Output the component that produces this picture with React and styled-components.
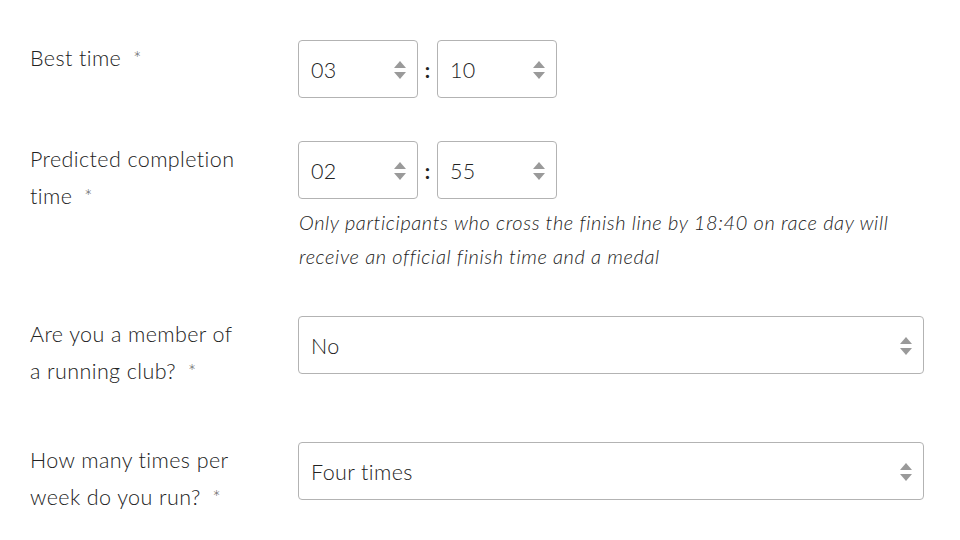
import React from 'react'
import styled, { createGlobalStyle } from 'styled-components'

const GlobalStyle = createGlobalStyle`
body {
  margin: 0;
  background: #ffffff;
  font-family: 'Lato', 'Open Sans', sans-serif;
  font-weight: 300;
  color: #222222;
}
`

const Form = styled.div`
padding: 40px 0 0 30px;
width: 960px;
box-sizing: border-box;
`

const Row = styled.div`
display: grid;
grid-template-columns: 268px 626px;
margin-bottom: ${p => p.spacing}px;
`

const Label = styled.div`
font-size: 21.5px;
letter-spacing: 0.4px;
line-height: 37px;
color: #222;
width: 212px;
`

const Star = styled.span`
color: #5a5a5a;
font-size: 19px;
margin-left: 12px;
`

const Field = styled.div`
display: flex;
flex-direction: column;
`

const TimeRow = styled.div`
display: flex;
align-items: center;
`

const Colon = styled.span`
font-size: 21px;
font-weight: 700;
width: 19px;
text-align: center;
color: #222;
`

const SelectBox = styled.div`
box-sizing: border-box;
width: ${p => p.width}px;
height: 58px;
border: 1px solid #b3b3b3;
border-radius: 4px;
display: flex;
align-items: center;
justify-content: space-between;
padding: 1px 10px 0 12px;
font-size: 21.5px;
letter-spacing: 0.4px;
color: #222;
background: #fff;
`

const Help = styled.p`
margin: 6px 0 0 1px;
max-width: 605px;
font-style: italic;
font-size: 20px;
letter-spacing: 0.6px;
line-height: 34px;
color: #222;
`

function Arrows() {
  return (
    <svg width="14" height="22" viewBox="0 0 14 22">
      <path d="M7 2 L13 9 L1 9 Z" fill="#9a9a9a" />
      <path d="M7 20 L13 13 L1 13 Z" fill="#9a9a9a" />
    </svg>
  )
}

function Select({ value, width }) {
  return (
    <SelectBox width={width}>
      <span>{value}</span>
      <Arrows />
    </SelectBox>
  )
}

export default function App() {
  return (
    <Form>
      <GlobalStyle />

      <Row spacing={43}>
        <Label>Best time<Star>*</Star></Label>
        <Field>
          <TimeRow>
            <Select value="03" width={120} />
            <Colon>:</Colon>
            <Select value="10" width={120} />
          </TimeRow>
        </Field>
      </Row>

      <Row spacing={43}>
        <Label>Predicted completion time<Star>*</Star></Label>
        <Field>
          <TimeRow>
            <Select value="02" width={120} />
            <Colon>:</Colon>
            <Select value="55" width={120} />
          </TimeRow>
          <Help>Only participants who cross the finish line by 18:40 on race day will receive an official finish time and a medal</Help>
        </Field>
      </Row>

      <Row spacing={52}>
        <Label>Are you a member of a running club?<Star>*</Star></Label>
        <Field>
          <Select value="No" width={626} />
        </Field>
      </Row>

      <Row spacing={0}>
        <Label>How many times per week do you run?<Star>*</Star></Label>
        <Field>
          <Select value="Four times" width={626} />
        </Field>
      </Row>

    </Form>
  )
}
